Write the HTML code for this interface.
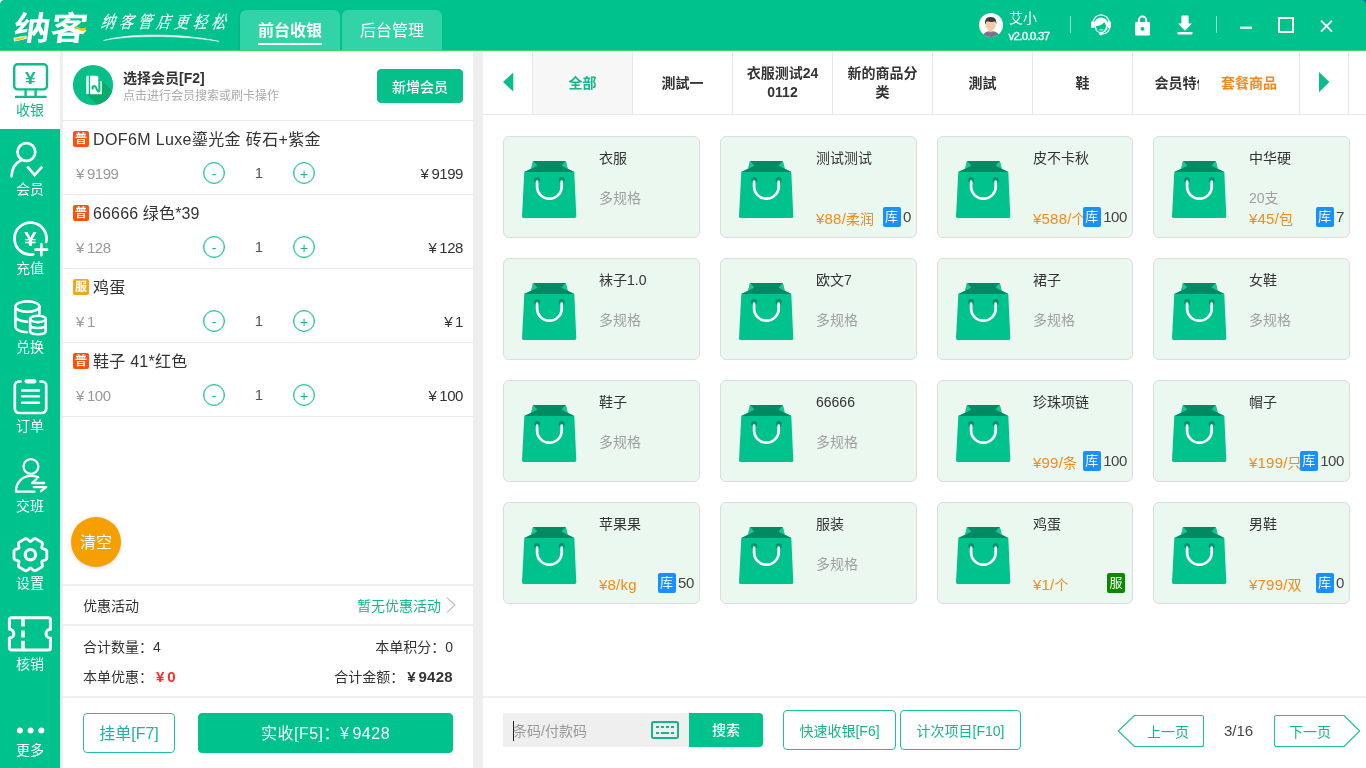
<!DOCTYPE html>
<html lang="zh-CN">
<head>
<meta charset="utf-8">
<title>纳客收银</title>
<style>
*{box-sizing:border-box;margin:0;padding:0}
html,body{width:1366px;height:768px;overflow:hidden;background:#fff}
body{font-family:"Liberation Sans","Noto Sans CJK SC",sans-serif;font-size:14px;color:#333;position:relative;will-change:transform}
.abs{position:absolute}
/* ---------- top bar ---------- */
#top{position:absolute;left:0;top:0;width:1366px;height:51px;background:#00c28c;border-bottom:1px solid #40d568}
#logo{position:absolute;left:10.5px;top:8.5px;width:76px;height:40px;color:#fff;font-weight:bold;font-size:33px;line-height:40px;transform-origin:0 100%;transform:scaleX(1.12) skewX(-7deg);white-space:nowrap}
#slogan{position:absolute;left:101px;top:11px;width:170px;height:24px;color:#fff;font-family:"Liberation Serif","Noto Serif CJK SC",serif;font-style:italic;font-size:17px;line-height:24px;letter-spacing:5.5px;white-space:nowrap;transform-origin:0 50%;transform:scaleX(.82) skewX(-10deg);-webkit-text-stroke:.3px #fff}
.tab{position:absolute;top:10px;height:40px;width:100px;background:#32d3a6;border-radius:6px 6px 0 0;color:#fff;font-size:16px;line-height:41px;text-align:center}
.tab.on{font-weight:bold;box-shadow:-1px 0 2px rgba(0,0,0,.08)}
.tab.on:after{content:"";position:absolute;left:18px;top:33px;width:64px;height:2px;background:#fff}
#uname{position:absolute;left:1009px;top:9px;color:#fff;font-size:14px;line-height:18px}
#uver{position:absolute;left:1008.5px;top:27.5px;color:#fff;font-size:11.5px;line-height:16px;letter-spacing:-.72px;-webkit-text-stroke:.35px #fff}
.vsep{position:absolute;top:16px;width:1px;height:17px;background:rgba(255,255,255,.55)}
/* ---------- sidebar ---------- */
#side{position:absolute;left:0;top:51px;width:60px;height:717px;background:#00c28c}
.nav{position:absolute;left:0;width:60px;text-align:center;color:#fff;font-size:14px;line-height:18px}
#navon{position:absolute;left:0;top:0;width:60px;height:78px;background:#fff}
.gap{position:absolute;background:#eeeeee}
/* ---------- left panel ---------- */
#lp{position:absolute;left:63px;top:51px;width:410px;height:717px;background:#fff}
.hl{position:absolute;left:0;height:1px;background:#ebebeb}
.item{position:absolute;left:0;width:410px;height:74px;border-bottom:1px solid #ebebeb}
.tag{position:absolute;left:10px;top:10px;width:16px;height:16px;border-radius:2px;color:#fff;font-size:12px;line-height:17px;text-align:center;background:#ff500d;font-weight:bold}
.iname{position:absolute;left:30px;top:8px;font-size:16px;line-height:22px;color:#333;white-space:nowrap;letter-spacing:.37px}
.iprice{position:absolute;left:13px;top:42.6px;font-size:15px;line-height:20px;color:#999;white-space:nowrap;letter-spacing:-.45px}
.circ{position:absolute;top:41px;width:22px;height:22px;border:1px solid #1cc39a;box-shadow:inset 0 0 0 .3px #1cc39a;border-radius:50%;color:#12b88b;font-size:14px;line-height:23px;text-align:center}
.qty{position:absolute;left:186px;top:42px;width:20px;text-align:center;font-size:15px;line-height:20px;color:#555}
.itot{position:absolute;right:10px;top:42.6px;font-size:15px;line-height:20px;color:#333;white-space:nowrap;letter-spacing:-.45px}
.yen{display:inline-block;margin-right:3px}
.yb{display:inline-block;margin:0 2.5px 0 3px}
.row{position:absolute;font-size:14px;line-height:20px;color:#333;white-space:nowrap}
/* ---------- right panel ---------- */
#rp{position:absolute;left:483px;top:51px;width:883px;height:717px;background:#fff}
.cat{position:absolute;top:0;height:63px;width:100px;border-right:1px solid #e8e8e8;font-weight:bold;font-size:14px;line-height:19px;color:#333;display:flex;align-items:center;justify-content:center;text-align:center;overflow:hidden;padding-top:1px}
.card{position:absolute;width:197px;height:102px;background:#ebf8ef;border:1px solid #dcdcdc;border-radius:6px}
.card svg{position:absolute;left:16.8px;top:24px}
.pn{position:absolute;left:95px;top:11px;font-size:14px;line-height:20px;color:#333;white-space:nowrap}
.ps{position:absolute;left:95px;top:51px;font-size:14px;line-height:20px;color:#a0a0a0;white-space:nowrap}
.pp{position:absolute;left:95px;top:72px;font-size:14px;line-height:20px;color:#f68a14;white-space:nowrap}
.pp b{font-weight:normal;font-size:15px;letter-spacing:.2px}
.st{position:absolute;right:5px;top:70px;height:20px;white-space:nowrap;font-size:15px;line-height:20px;color:#444;letter-spacing:-.4px;background:#ebf8ef}
.st i{display:inline-block;vertical-align:top;width:18px;height:20px;margin-right:2.5px;border-radius:2px;background:#1890ff;letter-spacing:0;color:#fff;font-style:normal;font-size:13px;line-height:20px;text-align:center}
.st i.g{background:#0b8a00;margin-right:2px}
#ov{position:absolute;left:0;top:0;pointer-events:none}
.btn{position:absolute;border:1px solid #17c397;border-radius:4px;color:#12b88b;font-size:14px;text-align:center;background:#fff}
</style>
</head>
<body>
<div id="top">
  <div id="logo">纳客</div>
  <div id="slogan">纳客管店更轻松</div>
  <div class="tab on" style="left:240px">前台收银</div>
  <div class="tab" style="left:342px">后台管理</div>
  <div id="uname">艾小</div>
  <div id="uver">v2.0.0.37</div>
  <div class="vsep" style="left:1070px"></div>
  <div class="vsep" style="left:1216px"></div>
</div>

<div id="side">
  <div id="navon"></div>
  <div class="nav" style="top:50px;color:#12b88b">收银</div>
  <div class="nav" style="top:129px">会员</div>
  <div class="nav" style="top:208px">充值</div>
  <div class="nav" style="top:287px">兑换</div>
  <div class="nav" style="top:366px">订单</div>
  <div class="nav" style="top:446px">交班</div>
  <div class="nav" style="top:523px">设置</div>
  <div class="nav" style="top:604px">核销</div>
  <div class="nav" style="top:690px">更多</div>
</div>
<div class="gap" style="left:60px;top:51px;width:3px;height:717px"></div>
<div class="gap" style="left:473px;top:51px;width:10px;height:717px"></div>

<div id="lp">
  <div class="row" style="left:60px;top:17px;font-weight:bold;color:#333">选择会员[F2]</div>
  <div class="row" style="left:60px;top:35px;font-size:12px;color:#aaa">点击进行会员搜索或刷卡操作</div>
  <div class="btn" style="left:314px;top:18px;width:86px;height:34px;line-height:34px;background:#05c08b;border-color:#05c08b;color:#fff;font-weight:500">新增会员</div>
  <div class="hl" style="top:69px;width:410px"></div>

  <div class="item" style="top:70px">
    <div class="tag">普</div><div class="iname">DOF6M Luxe鎏光金 砖石+紫金</div>
    <div class="iprice"><span class="yen">¥</span>9199</div>
    <div class="circ" style="left:140px">-</div><div class="qty">1</div><div class="circ" style="left:230px">+</div>
    <div class="itot"><span class="yen">¥</span>9199</div>
  </div>
  <div class="item" style="top:144px">
    <div class="tag">普</div><div class="iname" style="letter-spacing:.15px">66666 绿色*39</div>
    <div class="iprice"><span class="yen">¥</span>128</div>
    <div class="circ" style="left:140px">-</div><div class="qty">1</div><div class="circ" style="left:230px">+</div>
    <div class="itot"><span class="yen">¥</span>128</div>
  </div>
  <div class="item" style="top:218px">
    <div class="tag" style="background:#f5a614">服</div><div class="iname">鸡蛋</div>
    <div class="iprice"><span class="yen">¥</span>1</div>
    <div class="circ" style="left:140px">-</div><div class="qty">1</div><div class="circ" style="left:230px">+</div>
    <div class="itot"><span class="yen">¥</span>1</div>
  </div>
  <div class="item" style="top:292px">
    <div class="tag">普</div><div class="iname" style="letter-spacing:.25px">鞋子 41*红色</div>
    <div class="iprice"><span class="yen">¥</span>100</div>
    <div class="circ" style="left:140px">-</div><div class="qty">1</div><div class="circ" style="left:230px">+</div>
    <div class="itot"><span class="yen">¥</span>100</div>
  </div>

  <div class="abs" style="left:8px;top:466px;width:50px;height:50px;border-radius:50%;background:#f5a000;color:#fff;font-size:16px;line-height:52px;text-align:center;box-shadow:0 1px 4px rgba(0,0,0,.15)">清空</div>

  <div class="hl" style="top:533px;width:410px;height:2px;background:#f0f0f0"></div>
  <div class="row" style="left:20px;top:545px">优惠活动</div>
  <div class="row" style="right:32px;top:545px;color:#12b88b">暂无优惠活动</div>
  <div class="hl" style="top:573px;width:410px;height:2px;background:#f0f0f0"></div>
  <div class="row" style="left:20px;top:586px">合计数量：4</div>
  <div class="row" style="right:20px;top:586px">本单积分：0</div>
  <div class="row" style="left:20px;top:616px">本单优惠：<b style="color:#ff2a2a;font-size:15px;letter-spacing:.3px"><span class="yb">¥</span>0</b></div>
  <div class="row" style="right:20px;top:616px">合计金额：<b style="font-size:15px;letter-spacing:.3px"><span class="yb">¥</span>9428</b></div>
  <div class="hl" style="top:645px;width:410px;height:2px;background:#f0f0f0"></div>
  <div class="btn" style="left:20px;top:662px;width:92px;height:40px;line-height:40px;font-size:16px;border-color:#23bdb0;color:#1ab5a6">挂单[F7]</div>
  <div class="btn" style="left:135px;top:662px;width:255px;height:40px;line-height:40px;font-size:16px;background:#00c28c;border-color:#00c28c;color:#fff;letter-spacing:.5px">实收[F5]：<span class="yen">¥</span>9428</div>
</div>

<div id="rp">
  <div class="cat" style="left:0;width:50px"></div>
  <div class="cat" style="left:50px;background:#f7f7f7;color:#12b88b">全部</div>
  <div class="cat" style="left:150px">測試一</div>
  <div class="cat" style="left:250px;padding:1px 11px 0;word-break:break-all">衣服测试240112</div>
  <div class="cat" style="left:350px;padding:1px 11px 0">新的商品分类</div>
  <div class="cat" style="left:450px">測試</div>
  <div class="cat" style="left:550px">鞋</div>
  <div class="cat" style="left:650px">会员特价</div>
  <div class="cat" style="left:716px;width:101px;color:#f6871c;background:#fff">套餐商品</div>
  <div class="cat" style="left:817px;width:49px"></div>
  <div class="hl" style="top:63px;width:883px;background:#e8e8e8"></div>
  <div class="card" style="left:20px;top:85px;width:197px"><svg width="56" height="58" viewBox="-1 0 56 58"><path d="M11 0H43.8L45.7 7.8 52.3 11 54.3 55.2Q54.4 57 52.6 57H1.7Q-.1 57 0 55.2L2.3 11 9.1 7.8Z" fill="#00c28c"/><path d="M11 0H43.8L39.7 4.6 45.7 7.8 52.3 11H2.3L9.1 7.8 15.2 4.6Z" fill="#008a63"/><path d="M11 0L15.2 4.6 9.1 7.8ZM43.8 0L39.7 4.6 45.7 7.8Z" fill="#19c796"/><circle cx="15.1" cy="19" r="3" fill="#00936a"/><circle cx="39.7" cy="19" r="3" fill="#00936a"/><path d="M15.1 20.6V25.4a12.3 12.3 0 0 0 24.6 0V20.6" fill="none" stroke="#fff" stroke-width="2.7" stroke-linecap="round"/></svg><div class="pn">衣服</div><div class="ps">多规格</div></div>
<div class="card" style="left:237px;top:85px;width:197px"><svg width="56" height="58" viewBox="-1 0 56 58"><path d="M11 0H43.8L45.7 7.8 52.3 11 54.3 55.2Q54.4 57 52.6 57H1.7Q-.1 57 0 55.2L2.3 11 9.1 7.8Z" fill="#00c28c"/><path d="M11 0H43.8L39.7 4.6 45.7 7.8 52.3 11H2.3L9.1 7.8 15.2 4.6Z" fill="#008a63"/><path d="M11 0L15.2 4.6 9.1 7.8ZM43.8 0L39.7 4.6 45.7 7.8Z" fill="#19c796"/><circle cx="15.1" cy="19" r="3" fill="#00936a"/><circle cx="39.7" cy="19" r="3" fill="#00936a"/><path d="M15.1 20.6V25.4a12.3 12.3 0 0 0 24.6 0V20.6" fill="none" stroke="#fff" stroke-width="2.7" stroke-linecap="round"/></svg><div class="pn">测试测试</div><div class="pp"><b>¥88/</b>柔润</div><div class="st"><i>库</i>0</div></div>
<div class="card" style="left:454px;top:85px;width:196px"><svg width="56" height="58" viewBox="-1 0 56 58"><path d="M11 0H43.8L45.7 7.8 52.3 11 54.3 55.2Q54.4 57 52.6 57H1.7Q-.1 57 0 55.2L2.3 11 9.1 7.8Z" fill="#00c28c"/><path d="M11 0H43.8L39.7 4.6 45.7 7.8 52.3 11H2.3L9.1 7.8 15.2 4.6Z" fill="#008a63"/><path d="M11 0L15.2 4.6 9.1 7.8ZM43.8 0L39.7 4.6 45.7 7.8Z" fill="#19c796"/><circle cx="15.1" cy="19" r="3" fill="#00936a"/><circle cx="39.7" cy="19" r="3" fill="#00936a"/><path d="M15.1 20.6V25.4a12.3 12.3 0 0 0 24.6 0V20.6" fill="none" stroke="#fff" stroke-width="2.7" stroke-linecap="round"/></svg><div class="pn">皮不卡秋</div><div class="pp"><b>¥588/</b>个</div><div class="st"><i>库</i>100</div></div>
<div class="card" style="left:670px;top:85px;width:197px"><svg width="56" height="58" viewBox="-1 0 56 58"><path d="M11 0H43.8L45.7 7.8 52.3 11 54.3 55.2Q54.4 57 52.6 57H1.7Q-.1 57 0 55.2L2.3 11 9.1 7.8Z" fill="#00c28c"/><path d="M11 0H43.8L39.7 4.6 45.7 7.8 52.3 11H2.3L9.1 7.8 15.2 4.6Z" fill="#008a63"/><path d="M11 0L15.2 4.6 9.1 7.8ZM43.8 0L39.7 4.6 45.7 7.8Z" fill="#19c796"/><circle cx="15.1" cy="19" r="3" fill="#00936a"/><circle cx="39.7" cy="19" r="3" fill="#00936a"/><path d="M15.1 20.6V25.4a12.3 12.3 0 0 0 24.6 0V20.6" fill="none" stroke="#fff" stroke-width="2.7" stroke-linecap="round"/></svg><div class="pn">中华硬</div><div class="ps">20支</div><div class="pp"><b>¥45/</b>包</div><div class="st"><i>库</i>7</div></div>
<div class="card" style="left:20px;top:207px;width:197px"><svg width="56" height="58" viewBox="-1 0 56 58"><path d="M11 0H43.8L45.7 7.8 52.3 11 54.3 55.2Q54.4 57 52.6 57H1.7Q-.1 57 0 55.2L2.3 11 9.1 7.8Z" fill="#00c28c"/><path d="M11 0H43.8L39.7 4.6 45.7 7.8 52.3 11H2.3L9.1 7.8 15.2 4.6Z" fill="#008a63"/><path d="M11 0L15.2 4.6 9.1 7.8ZM43.8 0L39.7 4.6 45.7 7.8Z" fill="#19c796"/><circle cx="15.1" cy="19" r="3" fill="#00936a"/><circle cx="39.7" cy="19" r="3" fill="#00936a"/><path d="M15.1 20.6V25.4a12.3 12.3 0 0 0 24.6 0V20.6" fill="none" stroke="#fff" stroke-width="2.7" stroke-linecap="round"/></svg><div class="pn">袜子1.0</div><div class="ps">多规格</div></div>
<div class="card" style="left:237px;top:207px;width:197px"><svg width="56" height="58" viewBox="-1 0 56 58"><path d="M11 0H43.8L45.7 7.8 52.3 11 54.3 55.2Q54.4 57 52.6 57H1.7Q-.1 57 0 55.2L2.3 11 9.1 7.8Z" fill="#00c28c"/><path d="M11 0H43.8L39.7 4.6 45.7 7.8 52.3 11H2.3L9.1 7.8 15.2 4.6Z" fill="#008a63"/><path d="M11 0L15.2 4.6 9.1 7.8ZM43.8 0L39.7 4.6 45.7 7.8Z" fill="#19c796"/><circle cx="15.1" cy="19" r="3" fill="#00936a"/><circle cx="39.7" cy="19" r="3" fill="#00936a"/><path d="M15.1 20.6V25.4a12.3 12.3 0 0 0 24.6 0V20.6" fill="none" stroke="#fff" stroke-width="2.7" stroke-linecap="round"/></svg><div class="pn">欧文7</div><div class="ps">多规格</div></div>
<div class="card" style="left:454px;top:207px;width:196px"><svg width="56" height="58" viewBox="-1 0 56 58"><path d="M11 0H43.8L45.7 7.8 52.3 11 54.3 55.2Q54.4 57 52.6 57H1.7Q-.1 57 0 55.2L2.3 11 9.1 7.8Z" fill="#00c28c"/><path d="M11 0H43.8L39.7 4.6 45.7 7.8 52.3 11H2.3L9.1 7.8 15.2 4.6Z" fill="#008a63"/><path d="M11 0L15.2 4.6 9.1 7.8ZM43.8 0L39.7 4.6 45.7 7.8Z" fill="#19c796"/><circle cx="15.1" cy="19" r="3" fill="#00936a"/><circle cx="39.7" cy="19" r="3" fill="#00936a"/><path d="M15.1 20.6V25.4a12.3 12.3 0 0 0 24.6 0V20.6" fill="none" stroke="#fff" stroke-width="2.7" stroke-linecap="round"/></svg><div class="pn">裙子</div><div class="ps">多规格</div></div>
<div class="card" style="left:670px;top:207px;width:197px"><svg width="56" height="58" viewBox="-1 0 56 58"><path d="M11 0H43.8L45.7 7.8 52.3 11 54.3 55.2Q54.4 57 52.6 57H1.7Q-.1 57 0 55.2L2.3 11 9.1 7.8Z" fill="#00c28c"/><path d="M11 0H43.8L39.7 4.6 45.7 7.8 52.3 11H2.3L9.1 7.8 15.2 4.6Z" fill="#008a63"/><path d="M11 0L15.2 4.6 9.1 7.8ZM43.8 0L39.7 4.6 45.7 7.8Z" fill="#19c796"/><circle cx="15.1" cy="19" r="3" fill="#00936a"/><circle cx="39.7" cy="19" r="3" fill="#00936a"/><path d="M15.1 20.6V25.4a12.3 12.3 0 0 0 24.6 0V20.6" fill="none" stroke="#fff" stroke-width="2.7" stroke-linecap="round"/></svg><div class="pn">女鞋</div><div class="ps">多规格</div></div>
<div class="card" style="left:20px;top:329px;width:197px"><svg width="56" height="58" viewBox="-1 0 56 58"><path d="M11 0H43.8L45.7 7.8 52.3 11 54.3 55.2Q54.4 57 52.6 57H1.7Q-.1 57 0 55.2L2.3 11 9.1 7.8Z" fill="#00c28c"/><path d="M11 0H43.8L39.7 4.6 45.7 7.8 52.3 11H2.3L9.1 7.8 15.2 4.6Z" fill="#008a63"/><path d="M11 0L15.2 4.6 9.1 7.8ZM43.8 0L39.7 4.6 45.7 7.8Z" fill="#19c796"/><circle cx="15.1" cy="19" r="3" fill="#00936a"/><circle cx="39.7" cy="19" r="3" fill="#00936a"/><path d="M15.1 20.6V25.4a12.3 12.3 0 0 0 24.6 0V20.6" fill="none" stroke="#fff" stroke-width="2.7" stroke-linecap="round"/></svg><div class="pn">鞋子</div><div class="ps">多规格</div></div>
<div class="card" style="left:237px;top:329px;width:197px"><svg width="56" height="58" viewBox="-1 0 56 58"><path d="M11 0H43.8L45.7 7.8 52.3 11 54.3 55.2Q54.4 57 52.6 57H1.7Q-.1 57 0 55.2L2.3 11 9.1 7.8Z" fill="#00c28c"/><path d="M11 0H43.8L39.7 4.6 45.7 7.8 52.3 11H2.3L9.1 7.8 15.2 4.6Z" fill="#008a63"/><path d="M11 0L15.2 4.6 9.1 7.8ZM43.8 0L39.7 4.6 45.7 7.8Z" fill="#19c796"/><circle cx="15.1" cy="19" r="3" fill="#00936a"/><circle cx="39.7" cy="19" r="3" fill="#00936a"/><path d="M15.1 20.6V25.4a12.3 12.3 0 0 0 24.6 0V20.6" fill="none" stroke="#fff" stroke-width="2.7" stroke-linecap="round"/></svg><div class="pn">66666</div><div class="ps">多规格</div></div>
<div class="card" style="left:454px;top:329px;width:196px"><svg width="56" height="58" viewBox="-1 0 56 58"><path d="M11 0H43.8L45.7 7.8 52.3 11 54.3 55.2Q54.4 57 52.6 57H1.7Q-.1 57 0 55.2L2.3 11 9.1 7.8Z" fill="#00c28c"/><path d="M11 0H43.8L39.7 4.6 45.7 7.8 52.3 11H2.3L9.1 7.8 15.2 4.6Z" fill="#008a63"/><path d="M11 0L15.2 4.6 9.1 7.8ZM43.8 0L39.7 4.6 45.7 7.8Z" fill="#19c796"/><circle cx="15.1" cy="19" r="3" fill="#00936a"/><circle cx="39.7" cy="19" r="3" fill="#00936a"/><path d="M15.1 20.6V25.4a12.3 12.3 0 0 0 24.6 0V20.6" fill="none" stroke="#fff" stroke-width="2.7" stroke-linecap="round"/></svg><div class="pn">珍珠项链</div><div class="pp"><b>¥99/</b>条</div><div class="st"><i>库</i>100</div></div>
<div class="card" style="left:670px;top:329px;width:197px"><svg width="56" height="58" viewBox="-1 0 56 58"><path d="M11 0H43.8L45.7 7.8 52.3 11 54.3 55.2Q54.4 57 52.6 57H1.7Q-.1 57 0 55.2L2.3 11 9.1 7.8Z" fill="#00c28c"/><path d="M11 0H43.8L39.7 4.6 45.7 7.8 52.3 11H2.3L9.1 7.8 15.2 4.6Z" fill="#008a63"/><path d="M11 0L15.2 4.6 9.1 7.8ZM43.8 0L39.7 4.6 45.7 7.8Z" fill="#19c796"/><circle cx="15.1" cy="19" r="3" fill="#00936a"/><circle cx="39.7" cy="19" r="3" fill="#00936a"/><path d="M15.1 20.6V25.4a12.3 12.3 0 0 0 24.6 0V20.6" fill="none" stroke="#fff" stroke-width="2.7" stroke-linecap="round"/></svg><div class="pn">帽子</div><div class="pp"><b>¥199/</b>只</div><div class="st"><i>库</i>100</div></div>
<div class="card" style="left:20px;top:451px;width:197px"><svg width="56" height="58" viewBox="-1 0 56 58"><path d="M11 0H43.8L45.7 7.8 52.3 11 54.3 55.2Q54.4 57 52.6 57H1.7Q-.1 57 0 55.2L2.3 11 9.1 7.8Z" fill="#00c28c"/><path d="M11 0H43.8L39.7 4.6 45.7 7.8 52.3 11H2.3L9.1 7.8 15.2 4.6Z" fill="#008a63"/><path d="M11 0L15.2 4.6 9.1 7.8ZM43.8 0L39.7 4.6 45.7 7.8Z" fill="#19c796"/><circle cx="15.1" cy="19" r="3" fill="#00936a"/><circle cx="39.7" cy="19" r="3" fill="#00936a"/><path d="M15.1 20.6V25.4a12.3 12.3 0 0 0 24.6 0V20.6" fill="none" stroke="#fff" stroke-width="2.7" stroke-linecap="round"/></svg><div class="pn">苹果果</div><div class="pp"><b>¥8/kg</b></div><div class="st"><i>库</i>50</div></div>
<div class="card" style="left:237px;top:451px;width:197px"><svg width="56" height="58" viewBox="-1 0 56 58"><path d="M11 0H43.8L45.7 7.8 52.3 11 54.3 55.2Q54.4 57 52.6 57H1.7Q-.1 57 0 55.2L2.3 11 9.1 7.8Z" fill="#00c28c"/><path d="M11 0H43.8L39.7 4.6 45.7 7.8 52.3 11H2.3L9.1 7.8 15.2 4.6Z" fill="#008a63"/><path d="M11 0L15.2 4.6 9.1 7.8ZM43.8 0L39.7 4.6 45.7 7.8Z" fill="#19c796"/><circle cx="15.1" cy="19" r="3" fill="#00936a"/><circle cx="39.7" cy="19" r="3" fill="#00936a"/><path d="M15.1 20.6V25.4a12.3 12.3 0 0 0 24.6 0V20.6" fill="none" stroke="#fff" stroke-width="2.7" stroke-linecap="round"/></svg><div class="pn">服装</div><div class="ps">多规格</div></div>
<div class="card" style="left:454px;top:451px;width:196px"><svg width="56" height="58" viewBox="-1 0 56 58"><path d="M11 0H43.8L45.7 7.8 52.3 11 54.3 55.2Q54.4 57 52.6 57H1.7Q-.1 57 0 55.2L2.3 11 9.1 7.8Z" fill="#00c28c"/><path d="M11 0H43.8L39.7 4.6 45.7 7.8 52.3 11H2.3L9.1 7.8 15.2 4.6Z" fill="#008a63"/><path d="M11 0L15.2 4.6 9.1 7.8ZM43.8 0L39.7 4.6 45.7 7.8Z" fill="#19c796"/><circle cx="15.1" cy="19" r="3" fill="#00936a"/><circle cx="39.7" cy="19" r="3" fill="#00936a"/><path d="M15.1 20.6V25.4a12.3 12.3 0 0 0 24.6 0V20.6" fill="none" stroke="#fff" stroke-width="2.7" stroke-linecap="round"/></svg><div class="pn">鸡蛋</div><div class="pp"><b>¥1/</b>个</div><div class="st"><i class="g">服</i></div></div>
<div class="card" style="left:670px;top:451px;width:197px"><svg width="56" height="58" viewBox="-1 0 56 58"><path d="M11 0H43.8L45.7 7.8 52.3 11 54.3 55.2Q54.4 57 52.6 57H1.7Q-.1 57 0 55.2L2.3 11 9.1 7.8Z" fill="#00c28c"/><path d="M11 0H43.8L39.7 4.6 45.7 7.8 52.3 11H2.3L9.1 7.8 15.2 4.6Z" fill="#008a63"/><path d="M11 0L15.2 4.6 9.1 7.8ZM43.8 0L39.7 4.6 45.7 7.8Z" fill="#19c796"/><circle cx="15.1" cy="19" r="3" fill="#00936a"/><circle cx="39.7" cy="19" r="3" fill="#00936a"/><path d="M15.1 20.6V25.4a12.3 12.3 0 0 0 24.6 0V20.6" fill="none" stroke="#fff" stroke-width="2.7" stroke-linecap="round"/></svg><div class="pn">男鞋</div><div class="pp"><b>¥799/</b>双</div><div class="st"><i>库</i>0</div></div>
  <div class="hl" style="top:645px;width:883px;height:2px;background:#f0f0f0"></div>
  <div class="abs" style="left:20px;top:662px;width:186px;height:34px;background:#efefef;color:#999;font-size:14px;line-height:34px;padding-left:10px"><span style="border-left:1px solid #222;display:inline-block;height:20px;line-height:20px;vertical-align:middle;text-indent:-1px">条码/付款码</span></div>
  <div class="abs" style="left:206px;top:662px;width:74px;height:34px;background:#00c28c;color:#fff;font-size:14px;font-weight:500;line-height:34px;text-align:center;border-radius:0 4px 4px 0">搜索</div>
  <div class="btn" style="left:300px;top:659px;width:113px;height:40px;line-height:40px">快速收银[F6]</div>
  <div class="btn" style="left:417px;top:659px;width:121px;height:40px;line-height:40px">计次项目[F10]</div>
  <div class="row" style="left:664px;top:671px;color:#12b88b">上一页</div>
  <div class="row" style="left:741px;top:670px;font-size:15px;color:#444">3/16</div>
  <div class="row" style="left:806px;top:671px;color:#12b88b">下一页</div>
</div>
<svg id="ov" width="1366" height="768" viewBox="0 0 1366 768"><g stroke="#0fbc8b" fill="none" stroke-width="2.4" stroke-linecap="round" stroke-linejoin="round"><rect x="14.2" y="64.2" width="32.8" height="25.2" rx="3.5"/><path d="M25.6 90V96.6M35.6 90V96.6M16 96.9H45.6"/></g><text x="30.4" y="84.2" text-anchor="middle" font-family="Liberation Sans,sans-serif" font-weight="bold" font-size="16" fill="#0fbc8b" transform="translate(30.4 0) scale(1.2 1) translate(-30.4 0)">¥</text>
<g stroke="#fff" fill="none" stroke-width="2.7" stroke-linecap="round"><circle cx="26.4" cy="152" r="8.9"/><path d="M11.5 176.3C11.8 168.5 15.5 162.8 21.3 160.2"/><path d="M27.3 166.7L34.6 175 42.3 166.7" stroke-linecap="butt" stroke-linejoin="miter"/></g>
<g stroke="#fff" fill="none" stroke-width="2.7" stroke-linecap="round"><path d="M46.15 241.93A16 16 0 1 0 33.28 254.36"/><text x="30.4" y="246.3" text-anchor="middle" font-family="Liberation Sans,sans-serif" font-weight="bold" font-size="19.5" fill="#fff" stroke="none" transform="translate(30.4 0) scale(1.14 1) translate(-30.4 0)">¥</text><path d="M35.6 249.7H47M41.3 244V255.2"/></g>
<g stroke="#fff" fill="none" stroke-width="2.6" stroke-linecap="round" stroke-linejoin="round"><ellipse cx="27.4" cy="306.6" rx="12" ry="5.2"/><path d="M15.4 306.6V326.8C15.4 329.5 20 331.7 27 332.2M15.4 316.3C15.4 319 20 321.2 27 321.6M39.4 306.6V313.5"/><ellipse cx="37.9" cy="318.9" rx="7.8" ry="3.2"/><path d="M30.1 318.9V331C30.1 333 33.6 334.2 37.9 334.2S45.7 333 45.7 331V318.9M30.1 324.8C30.1 326.8 33.6 328 37.9 328S45.7 326.8 45.7 324.8"/></g>
<g stroke="#fff" fill="none" stroke-width="2.7" stroke-linecap="round" stroke-linejoin="round"><path d="M20.6 381.5H19A4.2 4.2 0 0 0 14.8 385.7V408.8A4.2 4.2 0 0 0 19 413H42A4.2 4.2 0 0 0 46.2 408.8V385.7A4.2 4.2 0 0 0 42 381.5H40.4"/><path d="M26.6 381.3H34.4" stroke-width="4.2"/><path d="M22.2 390.4H39M22.2 396.3H39M22.2 402.7H39" stroke-width="2.5"/></g>
<g stroke="#fff" fill="none" stroke-width="2.3" stroke-linecap="round" stroke-linejoin="round"><circle cx="30.9" cy="466.5" r="7.4"/><path d="M34.6 491.7H15.9C15.9 482.6 22.2 475.8 31 475.8C33.8 475.8 36.2 476.3 38.3 477.2"/><path d="M36.6 479L32 483H44.2M33.8 487.2H46.2L41 491.2"/></g>
<g stroke="#fff" fill="none" stroke-linejoin="round"><path d="M46.8 554.7L46.8 555.1L46.8 555.6L46.8 556.0L46.8 556.4L46.8 556.9L46.8 557.3L46.8 557.7L46.8 558.2L46.8 558.6L46.5 559.0L46.2 559.4L45.7 559.7L45.2 559.9L44.6 560.2L44.0 560.3L43.4 560.5L42.9 560.7L42.5 560.9L42.1 561.1L41.9 561.4L41.8 561.7L41.8 562.1L41.8 562.6L42.0 563.1L42.1 563.7L42.2 564.3L42.3 564.9L42.4 565.5L42.4 566.0L42.2 566.5L42.0 566.9L41.6 567.2L41.2 567.4L40.8 567.6L40.5 567.8L40.1 568.0L39.7 568.3L39.3 568.5L39.0 568.7L38.6 568.9L38.2 569.1L37.9 569.3L37.5 569.5L37.1 569.8L36.7 570.0L36.4 570.2L36.0 570.4L35.6 570.6L35.2 570.8L34.7 570.8L34.2 570.7L33.8 570.5L33.3 570.1L32.8 569.7L32.3 569.3L31.9 568.9L31.5 568.5L31.1 568.2L30.7 568.1L30.4 568.0L30.1 568.1L29.7 568.2L29.3 568.5L28.9 568.9L28.5 569.3L28.0 569.7L27.5 570.1L27.0 570.5L26.6 570.7L26.1 570.8L25.6 570.8L25.2 570.6L24.8 570.4L24.4 570.2L24.1 570.0L23.7 569.8L23.3 569.5L22.9 569.3L22.6 569.1L22.2 568.9L21.8 568.7L21.5 568.5L21.1 568.3L20.7 568.0L20.3 567.8L20.0 567.6L19.6 567.4L19.2 567.2L18.8 566.9L18.6 566.5L18.4 566.0L18.4 565.5L18.5 564.9L18.6 564.3L18.7 563.7L18.8 563.1L19.0 562.6L19.0 562.1L19.0 561.7L18.9 561.4L18.7 561.1L18.3 560.9L17.9 560.7L17.4 560.5L16.8 560.3L16.2 560.2L15.6 559.9L15.1 559.7L14.6 559.4L14.3 559.0L14.0 558.6L14.0 558.2L14.0 557.7L14.0 557.3L14.0 556.9L14.0 556.4L14.0 556.0L14.0 555.6L14.0 555.1L14.0 554.7L14.0 554.3L14.0 553.8L14.0 553.4L14.0 553.0L14.0 552.5L14.0 552.1L14.0 551.7L14.0 551.2L14.0 550.8L14.3 550.4L14.6 550.0L15.1 549.7L15.6 549.5L16.2 549.2L16.8 549.1L17.4 548.9L17.9 548.7L18.3 548.5L18.7 548.3L18.9 548.1L19.0 547.7L19.0 547.3L19.0 546.8L18.8 546.3L18.7 545.7L18.6 545.1L18.5 544.5L18.4 543.9L18.4 543.4L18.6 542.9L18.8 542.5L19.2 542.2L19.6 542.0L20.0 541.8L20.3 541.6L20.7 541.4L21.1 541.1L21.5 540.9L21.8 540.7L22.2 540.5L22.6 540.3L22.9 540.1L23.3 539.9L23.7 539.6L24.1 539.4L24.4 539.2L24.8 539.0L25.2 538.8L25.6 538.6L26.1 538.6L26.6 538.7L27.0 538.9L27.5 539.3L28.0 539.7L28.5 540.1L28.9 540.5L29.3 540.9L29.7 541.2L30.1 541.3L30.4 541.4L30.7 541.3L31.1 541.2L31.5 540.9L31.9 540.5L32.3 540.1L32.8 539.7L33.3 539.3L33.8 538.9L34.2 538.7L34.7 538.6L35.2 538.6L35.6 538.8L36.0 539.0L36.4 539.2L36.7 539.4L37.1 539.6L37.5 539.9L37.9 540.1L38.2 540.3L38.6 540.5L39.0 540.7L39.3 540.9L39.7 541.1L40.1 541.4L40.5 541.6L40.8 541.8L41.2 542.0L41.6 542.2L42.0 542.5L42.2 542.9L42.4 543.4L42.4 543.9L42.3 544.5L42.2 545.1L42.1 545.7L42.0 546.3L41.8 546.8L41.8 547.3L41.8 547.7L41.9 548.1L42.1 548.3L42.5 548.5L42.9 548.7L43.4 548.9L44.0 549.1L44.6 549.2L45.2 549.5L45.7 549.7L46.2 550.0L46.5 550.4L46.8 550.8L46.8 551.2L46.8 551.7L46.8 552.1L46.8 552.5L46.8 553.0L46.8 553.4L46.8 553.8L46.8 554.3Z" stroke-width="2.8"/><circle cx="30.4" cy="554.7" r="5.2" stroke-width="3.2"/></g>
<g stroke="#fff" fill="none" stroke-width="3" stroke-linejoin="round"><path d="M11.6 617.7H48.4A2 2 0 0 1 50.4 619.7V629.3A4.4 4.4 0 0 0 50.4 638.1V648A2 2 0 0 1 48.4 650H11.6A2 2 0 0 1 9.4 648V638.1A4.4 4.4 0 0 0 9.4 629.3V619.7A2 2 0 0 1 11.6 617.7Z"/><path d="M23 618V626.6M23 630.6V637.6M23 640.8V650" stroke-width="3.6"/></g>
<g fill="#fff"><circle cx="19.8" cy="730.6" r="3"/><circle cx="30.6" cy="730.6" r="3"/><circle cx="41.3" cy="730.6" r="3"/></g>
<defs><clipPath id="mc"><circle cx="93" cy="85" r="20.1"/></clipPath></defs><circle cx="93" cy="85" r="20.1" fill="#06bf89"/><path d="M101.9 80.6L122 100.7V114H106.4L86.4 94Z" fill="#06ad6a" clip-path="url(#mc)"/><path d="M87.3 75.7h1.4v18.5h-1.4a1 1 0 0 1-1-1v-16.5a1 1 0 0 1 1-1zM90.1 75.7h7.2a1 1 0 0 1 1 1v4.2h2.4a1.2 1.2 0 0 1 1.2 1.2v12.1h-11.8z" fill="#fff"/><path d="M92.7 88.7C91.8 86.3 94.7 85.1 95.8 87.1L97.5 90.6C98.1 91.9 99.4 91.7 99.4 90.3V81" fill="none" stroke="#06bf89" stroke-width="2.1" stroke-linecap="round" stroke-linejoin="round"/>
<defs><clipPath id="av"><circle cx="991" cy="25" r="12"/></clipPath></defs><circle cx="991" cy="25" r="12" fill="#fff"/><g clip-path="url(#av)"><path d="M982.5 38C982.5 33.5 985.5 31.2 991 31.2S999.5 33.5 999.5 38Z" fill="#77748a"/><rect x="989.2" y="28.5" width="3.2" height="3.6" fill="#f0be98"/><ellipse cx="990.7" cy="25.2" rx="5.1" ry="5.4" fill="#f6cba7"/><path d="M985.3 24.6C984.3 20.5 986 17 990.5 17C995.3 16.8 997 20.4 996.2 24.5C995.8 23.3 995.6 22.3 995.2 21.6C992.5 22.4 989 21.8 987 21.2C986.2 22 985.7 23.2 985.3 24.6Z" fill="#3b3b3d"/></g>
<g><circle cx="1101.1" cy="24.3" r="6.9" fill="#fff"/><path d="M1093 23A8.1 8.2 0 0 1 1109.2 23" fill="none" stroke="#fff" stroke-width="1.25"/><rect x="1091" y="21.6" width="3.6" height="6.5" rx="1" fill="#fff"/><rect x="1107.4" y="21.6" width="3.6" height="6.5" rx="1" fill="#fff"/><path d="M1095.2 27.5C1095.8 30.4 1098 32.4 1101 32.4S1106.3 30.4 1107 27.5" fill="none" stroke="#fff" stroke-width="1.2"/><path d="M1096 26C1099.6 25.7 1102.6 24.8 1104.3 22C1104.9 23.6 1105.5 24.6 1106.2 25.4C1106.1 28.6 1104 31.6 1101 31.6S1096.2 29.2 1096 26Z" fill="#00c28c"/><path d="M1099.3 29.6Q1101.2 30.7 1103.2 29.6" fill="none" stroke="#fff" stroke-width=".9"/><path d="M1109.6 28C1109 31.6 1105.6 33.8 1101.6 34.1" fill="none" stroke="#fff" stroke-width="1.2"/><ellipse cx="1100.8" cy="34.1" rx="1.7" ry="1.4" fill="#fff"/></g>
<g><path d="M1138.8 23V20.2A3.7 3.7 0 0 1 1146.2 20.2V23" fill="none" stroke="#fff" stroke-width="2"/><rect x="1135" y="22" width="15" height="13.5" rx="1.2" fill="#fff"/><circle cx="1142.5" cy="28.8" r="1.9" fill="#00c28c"/></g>
<path d="M1182.2 15.5h5.6a.8 .8 0 0 1 .8 .8V23.6H1192L1185 30.8 1178 23.6H1181.4V16.3a.8 .8 0 0 1 .8-.8zM1178.2 32h13.6a.8 .8 0 0 1 .8 .8v.8a.8 .8 0 0 1-.8 .8h-13.6a.8 .8 0 0 1-.8-.8v-.8a.8 .8 0 0 1 .8-.8z" fill="#fff"/>
<path d="M1240 27.7H1252" stroke="#fff" stroke-width="2.2" fill="none"/><rect x="1279" y="18" width="14" height="14" fill="none" stroke="#fffde6" stroke-width="2"/><path d="M1321 20.6L1332 31.6M1332 20.6L1321 31.6" stroke="#fff" stroke-width="2" fill="none"/>
<path d="M15 38.5Q20 38.2 25.5 36.2L24.5 38.2Q20 40.6 15.2 40.8Z" fill="#f7c600"/><path d="M74 26.5Q78 26.2 81 28.2Q84 28.6 86 27L85.5 30.6Q82 31.6 79.5 30Q77 27.8 74 26.5Z" fill="#f7c600"/>
<path d="M103.5 40.6C125 33.5 180 32.5 219 41.4C180 34.6 125 35.5 103.5 40.6Z" fill="#fff" stroke="#fff" stroke-width=".5"/>
<path d="M0 0H4.2A4.2 4.2 0 0 0 0 4.2Z" fill="#fff"/><path d="M1366 0H1361.8A4.2 4.2 0 0 1 1366 4.2Z" fill="#0557b5"/>
<path d="M503 82L513.3 72.5V91.6Z" fill="#0bbd8b"/><path d="M1329.4 82L1319 72V92.2Z" fill="#0bbd8b"/>
<path d="M447 597.6L455 605 447 612.4" fill="none" stroke="#bbb" stroke-width="1.1"/>
<g fill="none" stroke="#12b88b"><rect x="652" y="721.9" width="26" height="16" rx="1.6" stroke-width="2"/><path d="M656 727.1H659M661 727.1H664M666 727.1H669M671 727.1H674M656 733.1H659M661 733.1H669M671 733.1H674" stroke-width="2"/></g>
<g fill="none" stroke="#1fc39a" stroke-width="1.1" stroke-linejoin="round"><path d="M1118.3 731L1134.5 715.5H1201.5A2 2 0 0 1 1203.5 717.5V744.5A2 2 0 0 1 1201.5 746.5H1134.5Z"/><path d="M1359.7 731L1344 715.5H1276.5A2 2 0 0 0 1274.5 717.5V744.5A2 2 0 0 0 1276.5 746.5H1344Z"/></g></svg>
</body>
</html>
